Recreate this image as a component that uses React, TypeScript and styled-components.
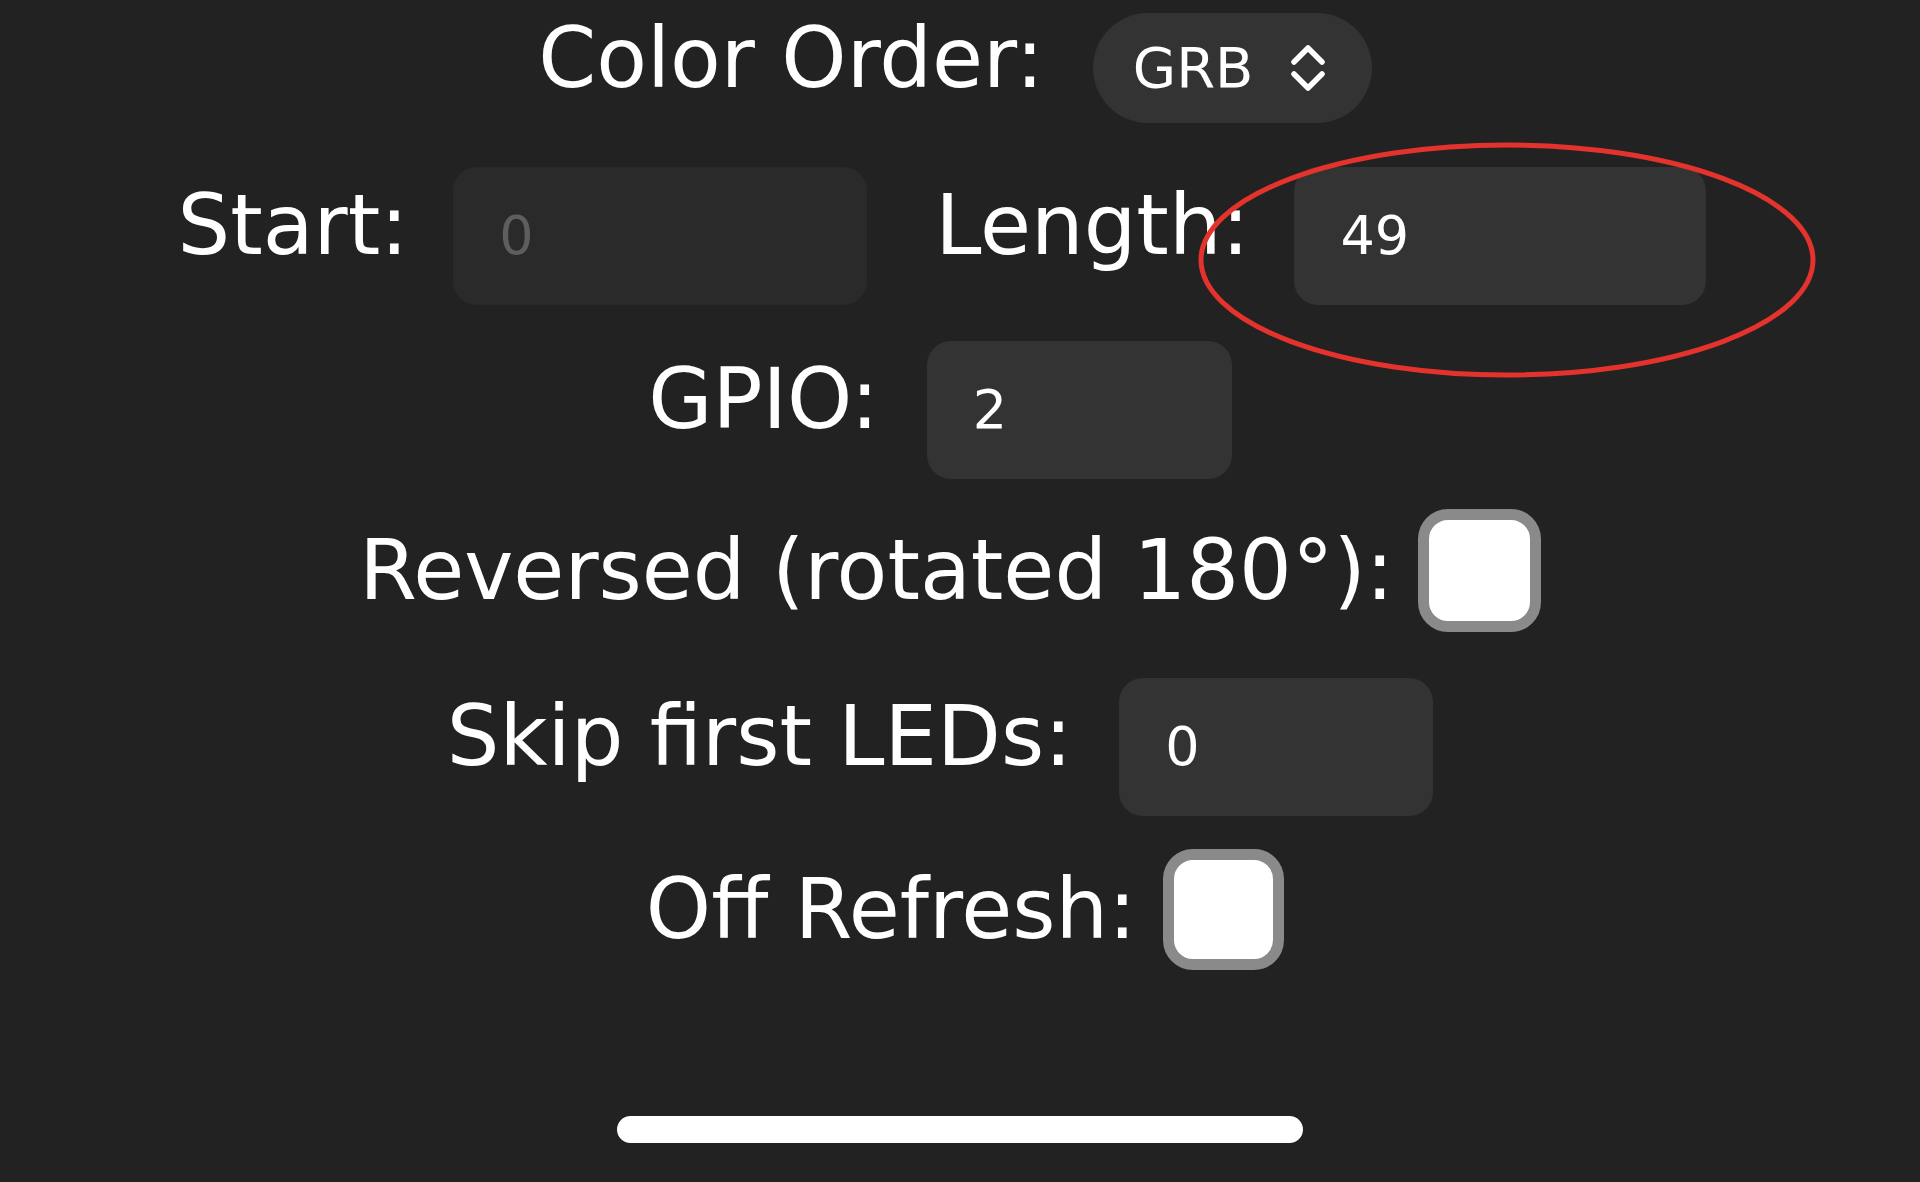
import styled, { createGlobalStyle } from "styled-components";

const GlobalStyle = createGlobalStyle`
  html, body {
    margin: 0;
    padding: 0;
    background: #222222;
  }
  body {
    font-family: "DejaVu Sans", Verdana, sans-serif;
    color: #ffffff;
  }
`;

const Screen = styled.div`
  position: relative;
  width: 1920px;
  height: 1182px;
  overflow: hidden;
  background: #222222;
  display: flex;
  flex-direction: column;
  align-items: center;
  padding-top: 10px;
  box-sizing: border-box;
`;

// $shift nudges a row off the centre line (negative = left)
const Row = styled.div<{ $top: number; $check?: boolean; $gap?: number; $shift?: number }>`
  display: flex;
  flex-direction: row;
  justify-content: center;
  align-items: ${(p) => (p.$check ? "center" : "baseline")};
  gap: ${(p) => p.$gap ?? 48}px;
  margin-top: ${(p) => p.$top}px;
  transform: translateX(${(p) => p.$shift ?? 0}px);
`;

const Pair = styled.div`
  display: flex;
  align-items: baseline;
  gap: 45px;
`;

const Label = styled.label`
  font-size: 83px;
  line-height: 97px;
  color: #ffffff;
  white-space: nowrap;
`;

const NumInput = styled.input<{ $w: number }>`
  width: ${(p) => p.$w}px;
  height: 138px;
  box-sizing: border-box;
  border: none;
  outline: none;
  border-radius: 24px;
  background: #333333;
  color: #ffffff;
  font-family: "DejaVu Sans", Verdana, sans-serif;
  font-size: 54px;
  padding: 0 0 0 46px;
  &:disabled {
    background: #2a2a2a;
    color: #5e5e5e;
  }
`;

const Select = styled.div`
  display: flex;
  align-items: center;
  gap: 34px;
  height: 110px;
  width: 279px;
  box-sizing: border-box;
  padding-left: 40px;
  border-radius: 55px;
  background: #333333;
  font-size: 56px;
  color: #ffffff;
`;

const Check = styled.span<{ $size: number }>`
  display: inline-block;
  width: ${(p) => p.$size}px;
  height: ${(p) => p.$size}px;
  box-sizing: border-box;
  border: 11px solid #8a8a8a;
  border-radius: 30px;
  background: #ffffff;
`;

const HomeBar = styled.div`
  width: 686px;
  height: 27px;
  border-radius: 14px;
  background: #ffffff;
  margin-top: 146px;
`;

const Annotation = styled.svg`
  position: absolute;
  left: 1195px;
  top: 140px;
  pointer-events: none;
`;

function Chevrons() {
  return (
    <svg width="42" height="50" viewBox="0 0 42 50" fill="none">
      <path
        d="M7 19 L21 5 L35 19 M7 31 L21 45 L35 31"
        stroke="#ffffff"
        strokeWidth="5.5"
        strokeLinecap="round"
        strokeLinejoin="round"
      />
    </svg>
  );
}

export default function App() {
  return (
    <>
      <GlobalStyle />
      <Screen>
        <Row $top={0} $gap={49} $shift={-5}>
          <Label>Color Order:</Label>
          <Select>
            <span>GRB</span>
            <Chevrons />
          </Select>
        </Row>
        <Row $top={44} $gap={68} $shift={-18}>
          <Pair>
            <Label>Start:</Label>
            <NumInput $w={414} value="0" disabled readOnly />
          </Pair>
          <Pair>
            <Label>Length:</Label>
            <NumInput $w={412} value="49" readOnly />
          </Pair>
        </Row>
        <Row $top={36} $shift={-20}>
          <Label>GPIO:</Label>
          <NumInput $w={305} value="2" readOnly />
        </Row>
        <Row $top={30} $check $gap={24} $shift={-10}>
          <Label>Reversed (rotated 180°):</Label>
          <Check $size={123} />
        </Row>
        <Row $top={46} $gap={47} $shift={-20}>
          <Label>Skip first LEDs:</Label>
          <NumInput $w={314} value="0" readOnly />
        </Row>
        <Row $top={33} $check $gap={27} $shift={5}>
          <Label>Off Refresh:</Label>
          <Check $size={121} />
        </Row>
        <HomeBar />
        <Annotation width="630" height="250" viewBox="0 0 630 250">
          <ellipse
            cx="312"
            cy="120"
            rx="306"
            ry="115"
            fill="none"
            stroke="#e4332c"
            strokeWidth="5"
          />
        </Annotation>
      </Screen>
    </>
  );
}
